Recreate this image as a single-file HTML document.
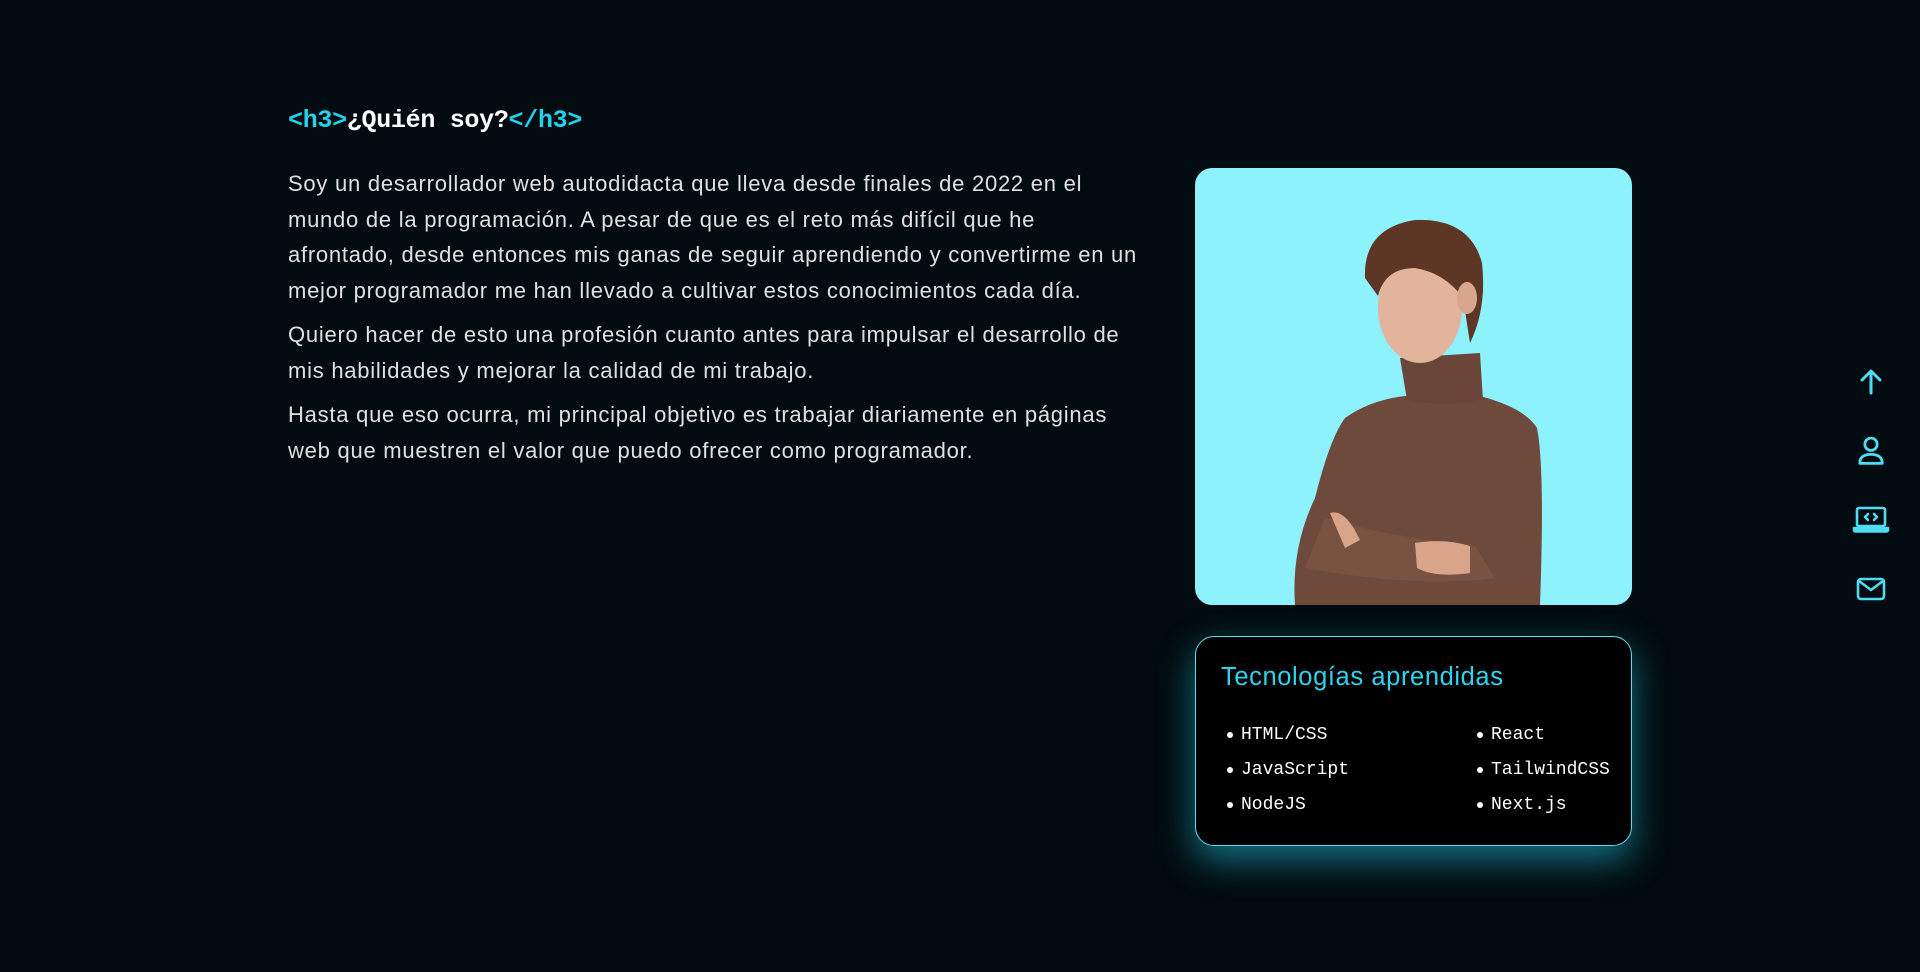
<!DOCTYPE html>
<html><head><meta charset="utf-8"><style>
html,body{margin:0;padding:0;background:#020c10;width:1920px;height:972px;overflow:hidden}
body{position:relative;font-family:"Liberation Sans",sans-serif;color:#e6e6e6}
h3{position:absolute;left:288px;top:106px;margin:0;font-family:"Liberation Mono",monospace;font-weight:bold;font-size:25px;color:#fff;letter-spacing:-0.3px}
h3 span{color:#22d3ee}
.txt{position:absolute;left:288px;top:166px;width:1100px;font-size:22px;line-height:35.5px;color:#e0e0e0;white-space:nowrap;letter-spacing:0.75px}
.txt p{margin:0 0 9px 0}
.photo{position:absolute;left:1195px;top:168px;width:437px;height:437px;border-radius:17px;overflow:hidden;background:#8ef2fd}
.card{position:absolute;left:1195px;top:636px;width:435px;height:208px;border:1px solid #5fdcef;border-radius:19px;background:#000;box-shadow:0 14px 34px rgba(34,190,220,.55)}
.card h4{margin:0;position:absolute;left:25px;top:26px;font-weight:normal;font-size:25.5px;letter-spacing:0.6px;color:#2fd3ee}
.li{position:absolute;font-family:"Liberation Mono",monospace;font-size:18px;line-height:20px;color:#fff}
.li:before{content:"";position:absolute;left:-14px;top:7px;width:6px;height:6px;border-radius:50%;background:#fff}
.ic{position:absolute;left:1855px;width:32px;height:32px}
</style></head><body>
<h3><span>&lt;h3&gt;</span>¿Quién soy?<span>&lt;/h3&gt;</span></h3>
<div class="txt">
<p>Soy un desarrollador web autodidacta que lleva desde finales de 2022 en el<br>mundo de la programación. A pesar de que es el reto más difícil que he<br>afrontado, desde entonces mis ganas de seguir aprendiendo y convertirme en un<br>mejor programador me han llevado a cultivar estos conocimientos cada día.</p>
<p>Quiero hacer de esto una profesión cuanto antes para impulsar el desarrollo de<br>mis habilidades y mejorar la calidad de mi trabajo.</p>
<p>Hasta que eso ocurra, mi principal objetivo es trabajar diariamente en páginas<br>web que muestren el valor que puedo ofrecer como programador.</p>
</div>
<div class="photo"><svg width="437" height="437" viewBox="0 0 437 437">
<path d="M150 250 Q175 232 210 228 L285 228 Q330 240 342 260 Q350 300 345 437 L100 437 Q96 380 120 330 Q135 270 150 250Z" fill="#6e4a3c"/>
<path d="M205 190 L285 185 L288 232 Q250 240 212 232Z" fill="#6a463a"/>
<path d="M130 350 Q200 370 280 378 L300 410 Q220 420 110 400Z" fill="#7a5242"/>
<path d="M220 375 Q250 370 275 378 L275 405 Q240 410 222 400Z" fill="#d9a58a"/>
<path d="M135 345 Q150 340 165 372 L150 380Z" fill="#d9a58a"/>
<ellipse cx="225" cy="140" rx="42" ry="55" fill="#e2b49b"/>
<path d="M170 110 Q168 60 220 52 Q275 50 287 95 Q292 140 275 175 L268 130 Q250 105 220 100 Q190 100 183 128Z" fill="#5e3626"/>
<ellipse cx="272" cy="130" rx="10" ry="16" fill="#d8a68c"/>
</svg></div>
<div class="card">
<h4>Tecnologías aprendidas</h4>
<div class="li" style="left:45px;top:88px">HTML/CSS</div>
<div class="li" style="left:45px;top:123px">JavaScript</div>
<div class="li" style="left:45px;top:158px">NodeJS</div>
<div class="li" style="left:295px;top:88px">React</div>
<div class="li" style="left:295px;top:123px">TailwindCSS</div>
<div class="li" style="left:295px;top:158px">Next.js</div>
</div>
<svg class="ic" style="top:366px" viewBox="0 0 32 32" fill="none" stroke="#4fdcf0" stroke-width="3" stroke-linecap="round" stroke-linejoin="round"><path d="M16 27V6M7 14l9-9 9 9"/></svg>
<svg class="ic" style="top:433px;left:1853px;width:36px;height:36px" viewBox="0 0 32 32" fill="none" stroke="#4fdcf0" stroke-width="2.4" stroke-linecap="round" stroke-linejoin="round"><circle cx="16" cy="10" r="5.5"/><path d="M6 27q0-8 10-8t10 8z"/></svg>
<svg class="ic" style="top:503px;left:1851px;width:40px" viewBox="0 0 40 32" fill="none" stroke="#4fdcf0" stroke-width="2.6" stroke-linecap="round" stroke-linejoin="round"><rect x="6" y="5" width="28" height="18" rx="2"/><path d="M17 11l-3 3 3 3M23 11l3 3-3 3"/><path d="M3 25h34v1.5q0 2-2 2H5q-2 0-2-2z" fill="#4fdcf0"/></svg>
<svg class="ic" style="top:573px" viewBox="0 0 32 32" fill="none" stroke="#4fdcf0" stroke-width="2.6" stroke-linecap="round" stroke-linejoin="round"><rect x="3" y="6" width="26" height="20" rx="3"/><path d="M4 8l12 9 12-9"/></svg>
</body></html>
